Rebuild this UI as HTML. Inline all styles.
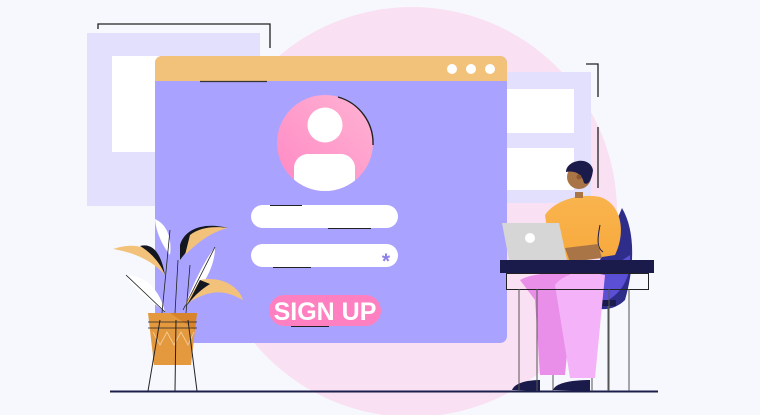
<!DOCTYPE html>
<html><head><style>
html,body{margin:0;padding:0;background:#f7f8fd;width:760px;height:415px;overflow:hidden;font-family:"Liberation Sans",sans-serif}
</style></head><body>
<svg width="760" height="415" viewBox="0 0 760 415" xmlns="http://www.w3.org/2000/svg">
<defs>
<linearGradient id="av" x1="1" y1="0" x2="0" y2="1"><stop offset="0" stop-color="#ffb3d3"/><stop offset="1" stop-color="#ff88c4"/></linearGradient>
<clipPath id="ac"><circle cx="325" cy="143" r="48"/></clipPath>
<linearGradient id="sh" x1="0" y1="0" x2="0" y2="1"><stop offset="0" stop-color="#f9b44e"/><stop offset="1" stop-color="#f8a93c"/></linearGradient>
</defs>
<circle cx="412" cy="212" r="205" fill="#f9e0f2"/>
<rect x="87" y="33" width="173" height="173" fill="#e2e0fd"/>
<rect x="112" y="56" width="120" height="96" fill="#fff"/>
<path d="M98 29V24H270V48" fill="none" stroke="#222" stroke-width="1.3"/>
<rect x="500" y="72" width="91" height="131" fill="#e2e0fd"/>
<rect x="500" y="89" width="74" height="44" fill="#fff"/>
<rect x="500" y="148" width="74" height="42" fill="#fff"/>
<path d="M586 64H598V97M598 127V188" fill="none" stroke="#222" stroke-width="1.3"/>
<rect x="155" y="56" width="352" height="287" rx="7" fill="#a9a3ff"/>
<path d="M155 81V63a7 7 0 0 1 7-7H500a7 7 0 0 1 7 7V81Z" fill="#f2c27b"/>
<circle cx="452" cy="69" r="5" fill="#fff"/><circle cx="471" cy="69" r="5" fill="#fff"/><circle cx="490" cy="69" r="5" fill="#fff"/>
<line x1="200" y1="81.5" x2="267" y2="81.5" stroke="#333" stroke-width="1.3"/>
<circle cx="325" cy="143" r="48" fill="url(#av)"/>
<g clip-path="url(#ac)"><circle cx="325" cy="125" r="17.5" fill="#fff"/><rect x="294" y="154" width="61" height="50" rx="14" fill="#fff"/></g>
<path d="M338 97A48 48 0 0 1 373 145" fill="none" stroke="#222" stroke-width="1.4"/>
<rect x="251" y="205" width="147" height="23" rx="11.5" fill="#fff"/>
<line x1="270" y1="205.5" x2="302" y2="205.5" stroke="#222" stroke-width="1"/>
<line x1="328" y1="228.5" x2="371" y2="228.5" stroke="#222" stroke-width="1"/>
<rect x="251" y="244" width="147" height="23" rx="11.5" fill="#fff"/>
<line x1="273" y1="267.5" x2="311" y2="267.5" stroke="#222" stroke-width="1"/>
<text x="386" y="268" font-size="21" font-weight="bold" fill="#8b7fe8" text-anchor="middle">*</text>
<rect x="269" y="295" width="112" height="31" rx="15.5" fill="#ff80c0"/>
<text x="325" y="320" font-size="25" font-weight="bold" fill="#fff" text-anchor="middle">SIGN UP</text>
<line x1="291" y1="326.5" x2="329" y2="326.5" stroke="#222" stroke-width="1"/>
<g>
<path d="M113 249C140 240 160 250 165 275C150 258 130 252 113 249Z" fill="#f2c27b"/>
<path d="M140 246C155 242 162 258 165 275C160 262 150 252 140 246Z" fill="#14171f"/>
<path d="M126 275C145 275 160 290 165 312C150 300 135 292 126 275Z" fill="#fff"/>
<line x1="126" y1="275" x2="165" y2="312" stroke="#222" stroke-width=".8"/>
<path d="M155 219C168 225 172 240 170 255C162 245 156 232 155 219Z" fill="#fff"/>
<path d="M180 245C185 228 205 222 228 228C210 228 195 240 180 260Z" fill="#14171f"/>
<path d="M190 235C200 227 215 226 228 228C210 232 195 245 185 255Z" fill="#f2c27b"/>
<path d="M215 247C205 260 195 280 185 305C200 290 215 270 215 247Z" fill="#fff"/>
<line x1="215" y1="247" x2="183" y2="310" stroke="#222" stroke-width=".8"/>
<path d="M200 280C220 276 238 285 243 300C225 290 210 288 185 305Z" fill="#f2c27b"/>
<path d="M200 280C195 290 190 300 185 308C192 298 200 290 210 284Z" fill="#14171f"/>
<path d="M162 313L170 230M175 313L178 260M186 313L190 265" stroke="#222" stroke-width=".8" fill="none"/>
<path d="M148 313H197L191 365H154Z" fill="#e4993e"/>
<path d="M170 313H197L195 330Z" fill="#d8842c"/>
<path d="M153 332L160 345L167 332L174 345L181 332L188 345L194 332" fill="none" stroke="#f6cf9a" stroke-width=".8"/>
<path d="M148 322H197M148 328H197" stroke="#222" stroke-width=".8"/>
<path d="M160 320L148 391M176 320L175 391M188 320L197 391" stroke="#222" stroke-width="1"/>
</g>
<line x1="110" y1="391.5" x2="658" y2="391.5" stroke="#1b1d4a" stroke-width="2"/>
<path d="M622 208C635 230 635 265 625 300C615 310 600 312 590 305L600 260Z" fill="#2e2d8a"/>
<path d="M630 255C632 280 618 300 595 305L600 275Z" fill="#5b4fd6"/>
<rect x="548" y="300" width="68" height="6" fill="#1b1b4b"/>
<path d="M553 306V391M592 306V391M608 306V391" stroke="#555" stroke-width="1"/>
<path d="M545 215C555 200 580 193 600 197C620 203 627 230 615 255L570 262L550 250Z" fill="url(#sh)"/>
<path d="M600 225C597 240 597 248 603 252" fill="none" stroke="#1b1b4b" stroke-width="1"/>
<path d="M565 248L598 244L602 258L570 262Z" fill="#a97547"/>
<circle cx="579" cy="177" r="12" fill="#a97547"/>
<path d="M566 172C566 160 590 155 593 170C592 180 588 186 584 183C582 174 575 170 566 172Z" fill="#1b1b4b"/>
<rect x="575" y="192" width="8" height="6" fill="#a97547"/>
<circle cx="579" cy="177" r="2.5" fill="#8c5533"/>
<path d="M520 280C535 272 560 272 575 275L565 375H540L535 300Z" fill="#e98fea"/>
<path d="M555 285C565 272 585 270 605 275L595 378H570Z" fill="#f4b3f9"/>
<path d="M512 390C515 382 530 380 540 380V391Z" fill="#1b1b4b"/>
<path d="M553 390C556 382 575 380 590 380V391Z" fill="#1b1b4b"/>
<rect x="500" y="260" width="154" height="13" fill="#1b1b4b"/>
<rect x="506.5" y="273.5" width="142" height="16" fill="none" stroke="#222" stroke-width="1"/>
<path d="M519 289V391M537 289V391M609 289V391M629 289V391" stroke="#555" stroke-width="1"/>
<path d="M502 223H559L567 260H509Z" fill="#d6d6d6"/>
<circle cx="530" cy="238" r="5" fill="#fff"/>
</svg>
</body></html>
